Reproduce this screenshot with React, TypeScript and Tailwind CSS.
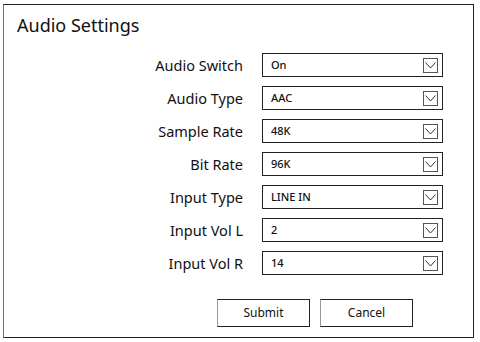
import React from 'react';

const rows = [
  { label: 'Audio Switch', value: 'On' },
  { label: 'Audio Type', value: 'AAC' },
  { label: 'Sample Rate', value: '48K' },
  { label: 'Bit Rate', value: '96K' },
  { label: 'Input Type', value: 'LINE IN' },
  { label: 'Input Vol L', value: '2' },
  { label: 'Input Vol R', value: '14' },
];

const ArrowBox: React.FC = () => (
  <div className="w-[15px] h-[15px] border border-[#555] flex items-center justify-center bg-white">
    <svg width="11" height="7" viewBox="0 0 11 7" fill="none">
      <path d="M0.5 0.5 L5.5 6 L10.5 0.5" stroke="#333" strokeWidth="1" />
    </svg>
  </div>
);

const App: React.FC = () => {
  return (
    <div className="w-[480px] h-[342px] bg-white pt-[4px] pl-[3px] font-['Noto_Sans',sans-serif] text-[#111]">
      <div className="w-[471px] h-[334px] border border-[#222] border-l-[#777] flex flex-col">
        <h1 className="pl-[13px] pt-[7px] text-[18px] leading-[26px] text-[#111]">Audio Settings</h1>

        <div className="mt-[15px] flex flex-col gap-[9px]">
          {rows.map((row) => (
            <div key={row.label} className="flex items-center">
              <span className="w-[239px] text-right text-[14.5px] leading-[24px]">{row.label}</span>
              <div className="ml-[19px] w-[181px] h-[24px] border border-[#222] flex items-center justify-between pl-[8px] pr-[4px]">
                <span className="text-[11px] font-medium">{row.value}</span>
                <ArrowBox />
              </div>
            </div>
          ))}
        </div>

        <div className="mt-[24px] flex gap-[10px] pl-[213px]">
          <button className="w-[93px] h-[28px] border border-[#222] border-l-[#999] bg-white text-[12px]">Submit</button>
          <button className="w-[93px] h-[28px] border border-[#222] border-l-[#999] bg-white text-[12px]">Cancel</button>
        </div>
      </div>
    </div>
  );
};

export default App;
